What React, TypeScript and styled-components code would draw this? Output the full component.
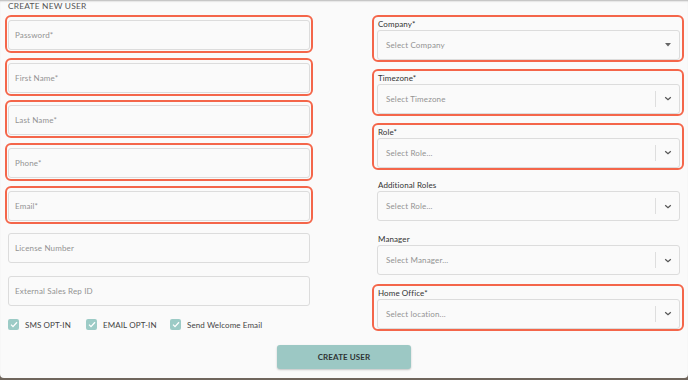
import React from "react";
import styled, { createGlobalStyle } from "styled-components";

const GlobalStyle = createGlobalStyle`
  html, body {
    margin: 0;
    padding: 0;
    background: #6f655c;
    font-family: Lato, "Open Sans", "Liberation Sans", sans-serif;
  }
  * { box-sizing: border-box; }
`;

const Card = styled.div`
  width: 688px;
  height: 378px;
  background: #fafafa;
  border-bottom-left-radius: 4px;
  border-bottom-right-radius: 4px;
  position: relative;
  overflow: hidden;
  box-shadow: inset 0 2px 2px -1px rgba(0, 0, 0, 0.28);
`;

const Title = styled.div`
  padding: 1px 0 0 8px;
  height: 13px;
  font-size: 8.4px;
  line-height: 11px;
  color: #555;
  letter-spacing: 0.2px;
`;

const Columns = styled.div`
  display: grid;
  grid-template-columns: 308px 312px;
  column-gap: 59px;
  padding: 2px 0 0 5px;
`;

const LeftCol = styled.div`
  display: flex;
  flex-direction: column;
  gap: 4.67px;
`;

const RightCol = styled.div`
  display: flex;
  flex-direction: column;
  gap: 6.8px;
`;

const Outline = styled.div<{ $required?: boolean }>`
  border: 2px solid ${(p) => (p.$required ? "#f4664a" : "transparent")};
  border-radius: 6px;
`;

const InputWrap = styled(Outline)`
  height: 38px;
  padding: 3px 1px 1px 1px;
`;

const Input = styled.input`
  display: block;
  width: 100%;
  height: 30px;
  border: 1px solid #dcdcdc;
  border-radius: 3px;
  background: #fafafa;
  padding: 0 0 0 6px;
  font-family: inherit;
  font-size: 8px;
  letter-spacing: 0.15px;
  color: #333;
  outline: none;
  &::placeholder { color: #939393; }
`;

const SelectWrap = styled(Outline)`
  height: 47px;
  padding: 1px 2px 1px 3px;
`;

const Label = styled.div`
  height: 12px;
  font-size: 8px;
  line-height: 12px;
  color: #333;
  padding-left: 1px;
  letter-spacing: 0.1px;
`;

const SelectBox = styled.div`
  display: flex;
  align-items: center;
  height: 30px;
  border: 1px solid #dcdcdc;
  border-radius: 3px;
  background: #fafafa;
  padding-left: 8px;
`;

const Placeholder = styled.span`
  flex: 1;
  font-size: 8px;
  letter-spacing: 0.15px;
  color: #939393;
`;

const Indicator = styled.div<{ $sep?: boolean }>`
  display: flex;
  align-items: center;
  justify-content: center;
  width: 24px;
  height: 16px;
  border-left: 1px solid ${(p) => (p.$sep ? "#dedede" : "transparent")};
  color: #666;
`;

const Checks = styled.div`
  display: flex;
  align-items: center;
  margin: 10px 0 0 3px;
  height: 12px;
`;

const CheckItem = styled.label<{ $w: number }>`
  display: flex;
  align-items: center;
  width: ${(p) => p.$w}px;
  font-size: 8px;
  color: #444;
  letter-spacing: 0.1px;
`;

const Box = styled.span`
  display: inline-flex;
  align-items: center;
  justify-content: center;
  width: 11px;
  height: 11px;
  border-radius: 2px;
  background: #9ccbc6;
  margin-right: 6px;
`;

const Footer = styled.div`
  display: flex;
  justify-content: center;
  margin-top: 14px;
`;

const Button = styled.button`
  width: 134px;
  height: 24px;
  border: none;
  border-radius: 3px;
  background: #9cc8c4;
  box-shadow: 0 1px 2px rgba(0, 0, 0, 0.22);
  font-family: inherit;
  font-size: 8px;
  font-weight: 700;
  color: #2e3434;
  letter-spacing: 0.1px;
`;

const Chevron = () => (
  <svg width="8" height="5" viewBox="0 0 8 5">
    <path d="M1.2 1.2l2.8 2.6 2.8-2.6" stroke="#555" strokeWidth="1.2" fill="none" />
  </svg>
);

const Caret = () => (
  <svg width="6" height="4" viewBox="0 0 6 4">
    <path d="M0 0h6L3 3.5z" fill="#666" />
  </svg>
);

const Tick = () => (
  <svg width="8" height="7" viewBox="0 0 8 7">
    <path d="M1 3.6l2 2L7 1.2" stroke="#fff" strokeWidth="1.3" fill="none" />
  </svg>
);

const leftFields = [
  { name: "Password*", req: true },
  { name: "First Name*", req: true },
  { name: "Last Name*", req: true },
  { name: "Phone*", req: true },
  { name: "Email*", req: true },
  { name: "License Number", req: false },
  { name: "External Sales Rep ID", req: false },
];

const rightFields = [
  { label: "Company*", ph: "Select Company", req: true, caret: true },
  { label: "Timezone*", ph: "Select Timezone", req: true },
  { label: "Role*", ph: "Select Role...", req: true },
  { label: "Additional Roles", ph: "Select Role...", req: false },
  { label: "Manager", ph: "Select Manager...", req: false },
  { label: "Home Office*", ph: "Select location...", req: true },
];

const checks = [
  { text: "SMS OPT-IN", w: 78 },
  { text: "EMAIL OPT-IN", w: 84 },
  { text: "Send Welcome Email", w: 120 },
];

const App: React.FC = () => (
  <Card>
    <GlobalStyle />
    <Title>CREATE NEW USER</Title>
    <Columns>
      <div>
        <LeftCol>
          {leftFields.map((f) => (
            <InputWrap key={f.name} $required={f.req}>
              <Input placeholder={f.name} />
            </InputWrap>
          ))}
        </LeftCol>
        <Checks>
          {checks.map((c) => (
            <CheckItem key={c.text} $w={c.w}>
              <Box>
                <Tick />
              </Box>
              {c.text}
            </CheckItem>
          ))}
        </Checks>
      </div>
      <RightCol>
        {rightFields.map((f) => (
          <SelectWrap key={f.label} $required={f.req}>
            <Label>{f.label}</Label>
            <SelectBox>
              <Placeholder>{f.ph}</Placeholder>
              <Indicator $sep={!f.caret}>{f.caret ? <Caret /> : <Chevron />}</Indicator>
            </SelectBox>
          </SelectWrap>
        ))}
      </RightCol>
    </Columns>
    <Footer>
      <Button>CREATE USER</Button>
    </Footer>
  </Card>
);

export default App;
